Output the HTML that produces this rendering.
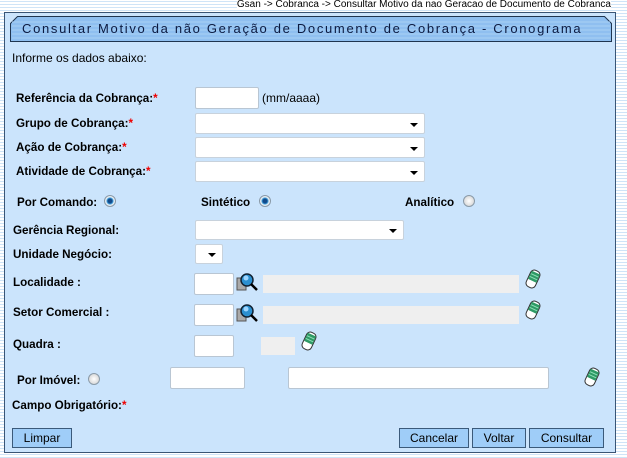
<!DOCTYPE html><html><head><meta charset="utf-8"><style>
body{margin:0;width:627px;height:458px;overflow:hidden;font-family:"Liberation Sans",Arial,sans-serif;background:repeating-linear-gradient(#fff 0 1px,#cfe4f7 1px 2px,#fff 2px 3px);position:relative}
.a{position:absolute}
.l{position:absolute;font-weight:bold;font-size:12px;color:#000;line-height:14px;transform:scaleX(.97);transform-origin:left}
.r{color:#e00}
.in{position:absolute;background:#fff;border:1px solid #b9c6d3;border-radius:2px;box-sizing:border-box}
.g{position:absolute;background:#efefef}
.sel{position:absolute;background:#fff;border:1px solid #c8d2dc;border-radius:2px;box-sizing:border-box}
.sel:after{content:"";position:absolute;right:6px;top:50%;margin-top:-1px;border:4px solid transparent;border-top:4px solid #000;border-bottom:0}
.rad{position:absolute;width:10px;height:10px;border-radius:50%;border:1px solid #8a9aa8;background:radial-gradient(circle,#134a8a 0 2px,#3a9ad8 3px,#e8eef4 4px)}
.rad.off{background:radial-gradient(circle,#fff,#ccc)}
.btn{position:absolute;top:428px;height:20px;background:#9fcdf8;border:1px solid #3b5a7a;box-sizing:border-box;font-size:12px;line-height:18px;text-align:center;color:#000}
</style></head><body>
<div class="a" style="right:16px;top:-1px;font-size:10px;line-height:11px;background:#fff;color:#000">Gsan -&gt; Cobranca -&gt; Consultar Motivo da nao Geracao de Documento de Cobranca</div>
<div class="a" style="left:4px;top:12px;width:610px;height:439px;background:#cbe4fc;border:1px solid #3a5575"></div>
<svg class="a" style="left:10px;top:16px" width="602" height="26"><path d="M0.5 25.5V7.5L7.5 0.5H594.5L601.5 7.5V25.5Z" fill="#8fbff0" stroke="#1f3550"/><g stroke="#a9d0f5" stroke-width="1"><path d="M2 6h598M2 10h598M2 14h598M2 18h598M2 22h598"/></g></svg>
<div class="a" style="left:22px;top:21px;font-size:13px;letter-spacing:1.68px;color:#0b1a40;line-height:16px">Consultar Motivo da não Geração de Documento de Cobrança - Cronograma</div>
<div class="a" style="left:12px;top:51px;font-size:12px">Informe os dados abaixo:</div>
<div class="l" style="left:16px;top:91px">Referência da Cobrança:<span class="r">*</span></div>
<div class="in" style="left:195px;top:87px;width:64px;height:22px"></div>
<div class="a" style="left:262px;top:91px;font-size:12px">(mm/aaaa)</div>
<div class="l" style="left:16px;top:116px">Grupo de Cobrança:<span class="r">*</span></div>
<div class="sel" style="left:195px;top:113px;width:230px;height:21px"></div>
<div class="l" style="left:16px;top:140px">Ação de Cobrança:<span class="r">*</span></div>
<div class="sel" style="left:195px;top:137px;width:230px;height:21px"></div>
<div class="l" style="left:16px;top:164px">Atividade de Cobrança:<span class="r">*</span></div>
<div class="sel" style="left:195px;top:161px;width:230px;height:21px"></div>
<div class="l" style="left:17px;top:195px">Por Comando:</div><div class="rad" style="left:104px;top:195px"></div>
<div class="l" style="left:201px;top:195px">Sintético</div><div class="rad" style="left:259px;top:195px"></div>
<div class="l" style="left:405px;top:195px">Analítico</div><div class="rad off" style="left:463px;top:195px"></div>
<div class="l" style="left:13px;top:223px">Gerência Regional:</div>
<div class="sel" style="left:195px;top:220px;width:209px;height:20px"></div>
<div class="l" style="left:13px;top:247px">Unidade Negócio:</div>
<div class="sel" style="left:195px;top:244px;width:28px;height:20px"></div>
<div class="l" style="left:13px;top:275px">Localidade :</div>
<div class="in" style="left:194px;top:273px;width:40px;height:22px"></div>
<div class="g" style="left:263px;top:275px;width:256px;height:18px"></div>
<div class="l" style="left:13px;top:305px">Setor Comercial :</div>
<div class="in" style="left:194px;top:304px;width:40px;height:22px"></div>
<div class="g" style="left:263px;top:306px;width:256px;height:18px"></div>
<div class="l" style="left:13px;top:337px">Quadra :</div>
<div class="in" style="left:194px;top:335px;width:40px;height:22px"></div>
<div class="g" style="left:261px;top:337px;width:34px;height:18px"></div>
<div class="l" style="left:17px;top:373px">Por Imóvel:</div><div class="rad off" style="left:88px;top:373px"></div>
<div class="in" style="left:170px;top:367px;width:75px;height:22px"></div>
<div class="in" style="left:288px;top:367px;width:261px;height:22px"></div>
<div class="l" style="left:12px;top:398px">Campo Obrigatório:<span class="r">*</span></div>
<svg class="a" style="left:236px;top:272px" width="26" height="22"><rect x="1" y="6" width="9" height="12" fill="#aaa" stroke="#555"/><circle cx="11" cy="8" r="6" fill="#2b8fd0" stroke="#123" stroke-width="1.5"/><circle cx="10" cy="6" r="2.5" fill="#9fd6ff"/><path d="M15 12l6 6" stroke="#000" stroke-width="2.5"/></svg>
<svg class="a" style="left:236px;top:303px" width="26" height="22"><rect x="1" y="6" width="9" height="12" fill="#aaa" stroke="#555"/><circle cx="11" cy="8" r="6" fill="#2b8fd0" stroke="#123" stroke-width="1.5"/><circle cx="10" cy="6" r="2.5" fill="#9fd6ff"/><path d="M15 12l6 6" stroke="#000" stroke-width="2.5"/></svg>
<svg class="a" style="left:523px;top:268px" width="20" height="22"><g transform="rotate(25 10 11)"><rect x="5" y="2" width="10" height="18" rx="4" fill="#fff" stroke="#333"/><rect x="5.5" y="4" width="9" height="9" fill="#2e9a66"/><path d="M6 7h8M6 10h8" stroke="#8fe0b8"/></g></svg>
<svg class="a" style="left:523px;top:299px" width="20" height="22"><g transform="rotate(25 10 11)"><rect x="5" y="2" width="10" height="18" rx="4" fill="#fff" stroke="#333"/><rect x="5.5" y="4" width="9" height="9" fill="#2e9a66"/><path d="M6 7h8M6 10h8" stroke="#8fe0b8"/></g></svg>
<svg class="a" style="left:299px;top:330px" width="20" height="22"><g transform="rotate(25 10 11)"><rect x="5" y="2" width="10" height="18" rx="4" fill="#fff" stroke="#333"/><rect x="5.5" y="4" width="9" height="9" fill="#2e9a66"/><path d="M6 7h8M6 10h8" stroke="#8fe0b8"/></g></svg>
<svg class="a" style="left:582px;top:366px" width="20" height="22"><g transform="rotate(25 10 11)"><rect x="5" y="2" width="10" height="18" rx="4" fill="#fff" stroke="#333"/><rect x="5.5" y="4" width="9" height="9" fill="#2e9a66"/><path d="M6 7h8M6 10h8" stroke="#8fe0b8"/></g></svg>
<div class="btn" style="left:12px;width:60px">Limpar</div>
<div class="btn" style="left:399px;width:70px">Cancelar</div>
<div class="btn" style="left:472px;width:54px">Voltar</div>
<div class="btn" style="left:529px;width:75px">Consultar</div>
</body></html>
